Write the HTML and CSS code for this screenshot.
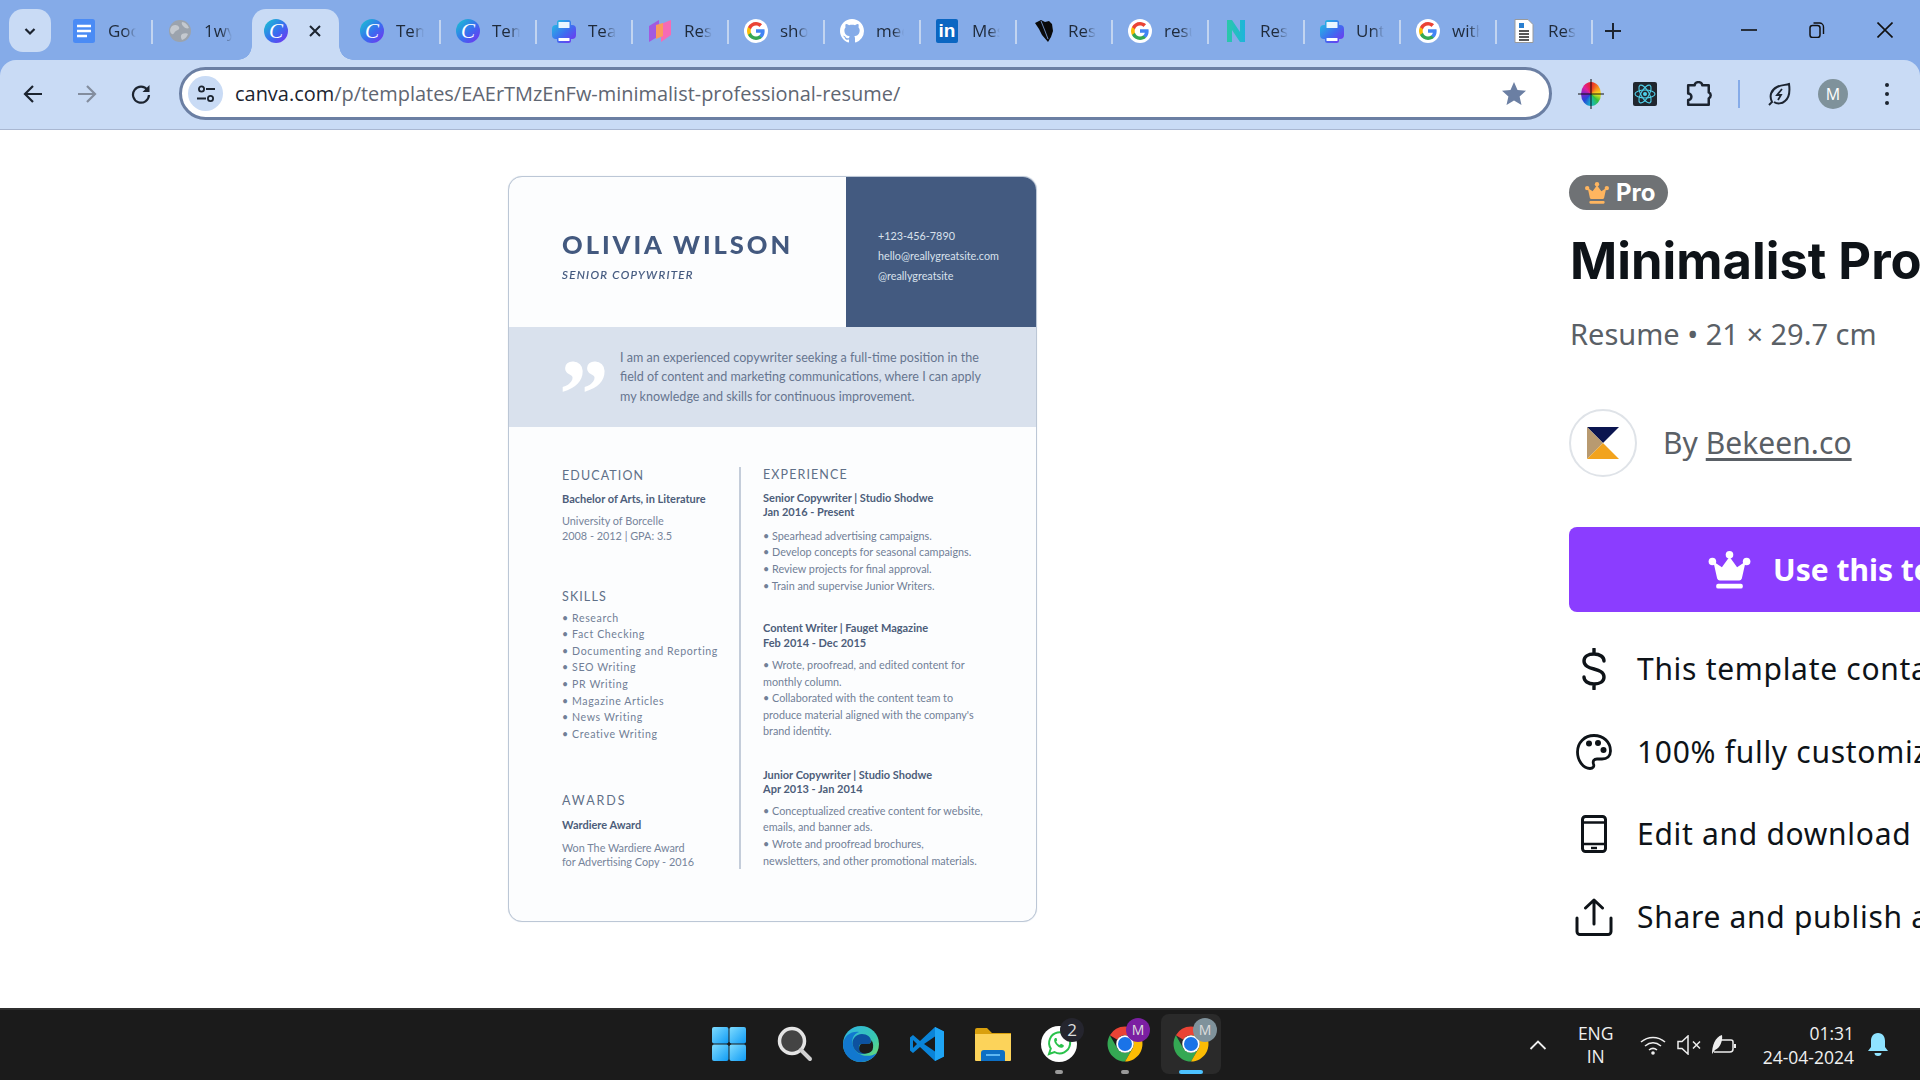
FILE: index.html
```html
<!DOCTYPE html>
<html lang="en">
<head>
<meta charset="utf-8">
<title>Minimalist Professional Resume</title>
<link rel="stylesheet" href="styles.css">
</head>
<body>
<svg class="sprite" aria-hidden="true">
  <defs>
    <linearGradient id="printerG" x1="0" y1="0" x2="1" y2="1"><stop offset="0" stop-color="#1fc8e0"/><stop offset=".55" stop-color="#3f6df0"/><stop offset="1" stop-color="#7a2cf0"/></linearGradient>
    <linearGradient id="winG" x1="0" y1="0" x2="1" y2="1"><stop offset="0" stop-color="#7fdcff"/><stop offset="1" stop-color="#0f9bf5"/></linearGradient>
    <linearGradient id="edgeA" x1="0" y1="0" x2="1" y2="1"><stop offset="0" stop-color="#2fb4e4"/><stop offset=".6" stop-color="#38c8b0"/><stop offset="1" stop-color="#7fe060"/></linearGradient>
    <linearGradient id="nG" x1="0" y1="0" x2="1" y2="0"><stop offset="0" stop-color="#2bc8a8"/><stop offset="1" stop-color="#1cb4dc"/></linearGradient>
    <symbol id="g-logo" viewBox="-3 -3 24 24">
      <circle cx="9" cy="9" r="12" fill="#fff"/>
      <path fill="#4285F4" d="M17.64 9.2c0-.637-.057-1.251-.164-1.84H9v3.481h4.844c-.209 1.125-.843 2.078-1.796 2.717v2.258h2.908c1.702-1.567 2.684-3.874 2.684-6.615z"/>
      <path fill="#34A853" d="M9 18c2.43 0 4.467-.806 5.956-2.18l-2.908-2.259c-.806.54-1.837.86-3.048.86-2.344 0-4.328-1.584-5.036-3.711H.957v2.332C2.438 15.983 5.482 18 9 18z"/>
      <path fill="#FBBC05" d="M3.964 10.71c-.18-.54-.282-1.117-.282-1.71s.102-1.17.282-1.71V4.958H.957C.347 6.173 0 7.548 0 9s.348 2.827.957 4.042l3.007-2.332z"/>
      <path fill="#EA4335" d="M9 3.58c1.321 0 2.508.454 3.44 1.345l2.582-2.58C13.463.891 11.426 0 9 0 5.482 0 2.438 2.017.957 4.958L3.964 7.29C4.672 5.163 6.656 3.58 9 3.58z"/>
    </symbol>
    <symbol id="printer" viewBox="0 0 24 24">
      <path fill="url(#printerG)" d="M5 6V3.5A2.5 2.5 0 0 1 7.500 1h9A2.500 2.500 0 0 1 19 3.500V6h1a4 4 0 0 1 4 4v6a4 4 0 0 1-4 4h-1v1.500a2.500 2.500 0 0 1-2.500 2.500h-9A2.500 2.500 0 0 1 5 21.500V20H4a4 4 0 0 1-4-4v-6a4 4 0 0 1 4-4z"/>
      <rect x="6.500" y="3" width="11" height="6" rx=".5" fill="#e9f6ff"/>
      <rect x="6.500" y="19" width="11" height="3" rx=".5" fill="#fff"/>
    </symbol>
    <symbol id="crown" viewBox="0 0 44 40">
      <circle cx="22" cy="4" r="4"/><circle cx="4" cy="11" r="4"/><circle cx="40" cy="11" r="4"/>
      <path d="M22 6l8 11 9-6-4 18a3 3 0 0 1-3 2H12a3 3 0 0 1-3-2L5 11l9 6z"/>
      <rect x="8" y="34.500" width="28" height="5" rx="2"/>
    </symbol>
    <symbol id="chrome" viewBox="0 0 48 48">
      <path fill="#ea4335" d="M24 4A20 20 0 0 1 41.300 14H24A10 10 0 0 0 15.300 19L6.700 14A20 20 0 0 1 24 4Z"/>
      <path fill="#34a853" d="M6.700 14A20 20 0 0 0 24 44L32.660 29A10 10 0 0 1 15.340 29Z"/>
      <path fill="#fbbc04" d="M41.300 14A20 20 0 0 1 24 44L32.660 29A10 10 0 0 0 24 14Z"/>
      <circle cx="24" cy="24" r="10" fill="#fff"/><circle cx="24" cy="24" r="8" fill="#1a73e8"/>
    </symbol>
  </defs>
</svg>

<header class="tabstrip">
  <button class="tab-search" aria-label="Search tabs">
    <svg class="ico-14" viewBox="0 0 14 14"><path d="M2.500 5l4.500 4.500L11.500 5" fill="none" stroke="#1c2430" stroke-width="2.200"/></svg>
  </button>
  <div class="tab">
    <svg class="fav" viewBox="0 0 24 24"><rect x="1" width="22" height="24" rx="2.500" fill="#4a8bf5"/><path d="M5 7h14M5 12h14M5 17h10" stroke="#fff" stroke-width="2.300"/></svg>
    <span class="tab-label">Google Docs</span>
  </div>
  <div class="tab">
    <svg class="fav" viewBox="0 0 24 24"><circle cx="12" cy="12" r="11" fill="#9ba3ad"/><path d="M4 7c3-2 6-1 7 1s-1 3-3 4-2 4-4 3-3-5 0-8zM14 3c3 0 6 3 7 6-2 1-4 0-5-1s-3-3-2-5zM14 15c2-1 5-1 6 0-1 3-3 5-6 6-1-2-2-4 0-6z" fill="#c4c9cf"/></svg>
    <span class="tab-label">1wy</span>
  </div>
  <div class="tab tab-active">
    <span class="canva-mark">C</span>
    <svg class="close-x" viewBox="0 0 14 14"><path d="M2 2l10 10M12 2L2 12" stroke="#1c2430" stroke-width="2"/></svg>
  </div>
  <div class="tab"><span class="canva-mark">C</span><span class="tab-label">Templates</span></div>
  <div class="tab"><span class="canva-mark">C</span><span class="tab-label">Templates</span></div>
  <div class="tab"><svg class="fav"><use href="#printer"/></svg><span class="tab-label">Teal</span></div>
  <div class="tab">
    <svg class="fav" viewBox="0 0 24 24"><path d="M1 7l10-6v16L1 23z" fill="#a25ae0"/><path d="M13 5l10-4v15l-10 7z" fill="#f56bb5"/><path d="M8 6l7-2v13l-7 3z" fill="#fb9a5c"/></svg>
    <span class="tab-label">Resume</span>
  </div>
  <div class="tab"><svg class="fav"><use href="#g-logo"/></svg><span class="tab-label">should</span></div>
  <div class="tab">
    <svg class="fav" viewBox="0 0 16 16"><path fill="#fff" d="M8 0C3.580 0 0 3.580 0 8c0 3.540 2.290 6.530 5.470 7.590.4.070.55-.17.55-.38 0-.19-.01-.82-.01-1.490-2.010.37-2.530-.49-2.690-.94-.09-.23-.48-.94-.82-1.130-.28-.15-.68-.52-.01-.53.63-.01 1.080.58 1.230.82.72 1.210 1.870.87 2.330.66.07-.52.28-.87.51-1.070-1.780-.2-3.640-.89-3.640-3.950 0-.87.31-1.590.82-2.150-.08-.2-.36-1.020.08-2.120 0 0 .67-.21 2.200.82.64-.18 1.320-.27 2-.27s1.360.09 2 .27c1.530-1.040 2.200-.82 2.200-.82.44 1.100.16 1.920.08 2.120.51.56.82 1.270.82 2.150 0 3.070-1.870 3.750-3.650 3.950.29.25.54.73.54 1.480 0 1.070-.01 1.930-.01 2.200 0 .21.15.46.55.38A8.010 8.010 0 0016 8c0-4.420-3.580-8-8-8z"/></svg>
    <span class="tab-label">meet</span>
  </div>
  <div class="tab"><span class="li-mark">in</span><span class="tab-label">Messaging</span></div>
  <div class="tab">
    <svg class="fav" viewBox="0 0 24 24"><path d="M3 4l6-3 4 2 4-1 3 3 1 7-2 6-3 5-6-7-3-6z" fill="#0a0a0a"/><path d="M9 2l4 10 3 8" stroke="#85abe8" stroke-width=".8" fill="none"/></svg>
    <span class="tab-label">Resume</span>
  </div>
  <div class="tab"><svg class="fav"><use href="#g-logo"/></svg><span class="tab-label">resume</span></div>
  <div class="tab">
    <svg class="fav" viewBox="0 0 24 24"><path d="M3 1h5l8 12V1h5v22h-5L8 11v12H3z" fill="url(#nG)"/></svg>
    <span class="tab-label">Resume</span>
  </div>
  <div class="tab"><svg class="fav"><use href="#printer"/></svg><span class="tab-label">Untitled</span></div>
  <div class="tab"><svg class="fav"><use href="#g-logo"/></svg><span class="tab-label">with</span></div>
  <div class="tab">
    <svg class="fav" viewBox="0 0 24 24"><path d="M3 .5h13l5 5V23.500H3z" fill="#fff" stroke="#9a9a9a"/><rect x="7" y="4" width="5" height="5" fill="#2a7fd0"/><path d="M7 12h10M7 15h10M7 18h10M7 21h10" stroke="#222" stroke-width="1.400"/></svg>
    <span class="tab-label">Resume</span>
  </div>
  <button class="new-tab" aria-label="New tab">
    <svg class="ico-16" viewBox="0 0 16 16"><path d="M8 0v16M0 8h16" stroke="#1c2430" stroke-width="2"/></svg>
  </button>
  <div class="win-controls">
    <svg class="win-btn" viewBox="0 0 16 16"><path d="M0 8h16" stroke="#111" stroke-width="1.600"/></svg>
    <svg class="win-btn" viewBox="0 0 16 16"><rect x="1" y="3.500" width="10" height="12" rx="2.500" fill="none" stroke="#111" stroke-width="1.500"/><path d="M4.500 1h6a4 4 0 0 1 4 4v7" fill="none" stroke="#111" stroke-width="1.400"/></svg>
    <svg class="win-btn" viewBox="0 0 16 16"><path d="M.5.500l15 15M15.500.500l-15 15" stroke="#111" stroke-width="1.600"/></svg>
  </div>
</header>

<nav class="toolbar">
  <button class="tool-btn" aria-label="Back"><svg class="ico-20" viewBox="0 0 20 20"><path d="M19 10H2M10 2l-8 8 8 8" fill="none" stroke="#1c2430" stroke-width="2.200"/></svg></button>
  <button class="tool-btn" aria-label="Forward"><svg class="ico-20" viewBox="0 0 20 20"><path d="M1 10h17M10 2l8 8-8 8" fill="none" stroke="#838d9e" stroke-width="2.200"/></svg></button>
  <button class="tool-btn" aria-label="Reload"><svg class="ico-20" viewBox="0 0 20 20"><path d="M16.500 6A8 8 0 1 0 18 11" fill="none" stroke="#1c2430" stroke-width="2.200"/><path d="M18.500 1v7h-7z" fill="#1c2430"/></svg></button>
  <div class="address">
    <span class="tune">
      <svg class="ico-20" viewBox="0 0 20 20"><circle cx="5.500" cy="5" r="2.600" fill="none" stroke="#1c2430" stroke-width="1.800"/><path d="M10 5h9M1 14.500h9" stroke="#1c2430" stroke-width="2"/><circle cx="14.500" cy="14.500" r="2.600" fill="none" stroke="#1c2430" stroke-width="1.800"/></svg>
    </span>
    <span class="url"><span class="url-host">canva.com</span>/p/templates/EAErTMzEnFw-minimalist-professional-resume/</span>
    <svg class="star" viewBox="0 0 24 24"><path d="M12 0l3.500 8 8.500.8-6.400 5.700 1.900 8.500L12 18.600 4.500 23l1.900-8.500L0 8.800 8.500 8z" fill="#6b7fa3"/></svg>
  </div>
  <div class="ext-btn">
    <span class="wheel"></span>
    <svg class="wheel-cross" viewBox="0 0 26 30"><path d="M13 0v30M0 15h26" stroke="#111" stroke-width="1"/></svg>
  </div>
  <div class="ext-btn">
    <svg class="ext-svg" viewBox="0 0 24 24"><rect width="24" height="24" rx="2" fill="#20262e"/><g fill="none" stroke="#4fd0ea" stroke-width="1.100"><ellipse cx="12" cy="12" rx="10" ry="4"/><ellipse cx="12" cy="12" rx="10" ry="4" transform="rotate(60 12 12)"/><ellipse cx="12" cy="12" rx="10" ry="4" transform="rotate(120 12 12)"/></g><circle cx="12" cy="12" r="2" fill="#4fd0ea"/></svg>
  </div>
  <div class="ext-btn">
    <svg class="ext-svg ext-puzzle" viewBox="0 0 24 24"><path d="M2 4h6a3.500 3 0 0 1 7 0h6v6.500a3 3 0 0 1 0 5.500v6H2v-4.500a3 3 0 0 0 0-6z" fill="none" stroke="#1c2430" stroke-width="2.300" stroke-linejoin="round"/></svg>
  </div>
  <span class="tool-divider"></span>
  <div class="ext-btn">
    <svg class="ext-svg" viewBox="0 0 24 24"><path d="M2 23c1.500-1.500 2-2 3-3-3-6-1-12 5-15 4-2 9-2 12-3 1 7 0 14-4 17-3 3-8 3-11 1" fill="none" stroke="#1c2430" stroke-width="2"/><path d="M15 7l-5 6h4l-3 5" fill="none" stroke="#1c2430" stroke-width="1.800"/></svg>
  </div>
  <div class="ext-btn"><span class="avatar">M</span></div>
  <div class="ext-btn"><span class="kebab"><i></i><i></i><i></i></span></div>
</nav>

<main class="page">
  <article class="resume">
    <section class="r-head">
      <div class="r-id">
        <h2 class="r-name">OLIVIA WILSON</h2>
        <p class="r-role">SENIOR COPYWRITER</p>
      </div>
      <div class="r-contact">
        <p>+123-456-7890</p>
        <p>hello@reallygreatsite.com</p>
        <p>@reallygreatsite</p>
      </div>
    </section>
    <section class="r-band">
      <span class="r-quote">”</span>
      <p class="r-intro">I am an experienced copywriter seeking a full-time position in the<br>field of content and marketing communications, where I can apply<br>my knowledge and skills for continuous improvement.</p>
    </section>
    <section class="r-body">
      <div class="r-left">
        <h3 class="r-h r-h-edu">EDUCATION</h3>
        <p class="r-b r-gap-8">Bachelor of Arts, in Literature</p>
        <p class="r-t r-gap-8">University of Borcelle<br>2008 - 2012 | GPA: 3.5</p>
        <h3 class="r-h r-h-skills">SKILLS</h3>
        <ul class="r-list r-skills">
          <li>• Research</li><li>• Fact Checking</li><li>• Documenting and Reporting</li><li>• SEO Writing</li><li>• PR Writing</li><li>• Magazine Articles</li><li>• News Writing</li><li>• Creative Writing</li>
        </ul>
        <h3 class="r-h r-h-awards">AWARDS</h3>
        <p class="r-b r-gap-9">Wardiere Award</p>
        <p class="r-t r-gap-8">Won The Wardiere Award<br>for Advertising Copy - 2016</p>
      </div>
      <div class="r-right">
        <h3 class="r-h r-h-exp">EXPERIENCE</h3>
        <p class="r-b r-job r-gap-9">Senior Copywriter | Studio Shodwe<br>Jan 2016 - Present</p>
        <ul class="r-list r-gap-8"><li>• Spearhead advertising campaigns.</li><li>• Develop concepts for seasonal campaigns.</li><li>• Review projects for final approval.</li><li>• Train and supervise Junior Writers.</li></ul>
        <p class="r-b r-job r-gap-27">Content Writer | Fauget Magazine<br>Feb 2014 - Dec 2015</p>
        <ul class="r-list r-gap-7"><li>• Wrote, proofread, and edited content for</li><li>monthly column.</li><li>• Collaborated with the content team to</li><li>produce material aligned with the company's</li><li>brand identity.</li></ul>
        <p class="r-b r-job r-gap-28">Junior Copywriter | Studio Shodwe<br>Apr 2013 - Jan 2014</p>
        <ul class="r-list r-gap-6"><li>• Conceptualized creative content for website,</li><li>emails, and banner ads.</li><li>• Wrote and proofread brochures,</li><li>newsletters, and other promotional materials.</li></ul>
      </div>
    </section>
  </article>

  <aside class="details">
    <div class="pro-badge"><svg class="pro-crown"><use href="#crown"/></svg><span>Pro</span></div>
    <h1 class="title">Minimalist Professional Resume</h1>
    <p class="meta">Resume • 21 × 29.7 cm</p>
    <div class="author">
      <span class="author-logo">
        <svg class="ico-32" viewBox="0 0 32 32"><path d="M0 0h32L16 16z" fill="#0b1550"/><path d="M0 0l16 16L0 32z" fill="#b89a70"/><path d="M0 32l16-16 16 16z" fill="#f2a31e"/></svg>
      </span>
      <span class="author-text">By <a class="author-link">Bekeen.co</a></span>
    </div>
    <button class="use-btn"><svg class="use-crown"><use href="#crown"/></svg><span>Use this template</span></button>
    <ul class="features">
      <li>
        <span class="f-ico"><svg class="f-dollar" viewBox="0 0 26 42"><path d="M23 13c0-4-4-7-10-7S3 8.500 3 13c0 10 20 6 20 16 0 4.500-4 7-10 7S3 33 3 29M13 1v5M13 36v5" fill="none" stroke="#0e1318" stroke-width="3.400" stroke-linecap="round"/></svg></span>
        <span>This template contains paid elements</span>
      </li>
      <li>
        <span class="f-ico"><svg class="f-36" viewBox="0 0 36 36"><path d="M18 1.500C8.500 1.500 1.500 8.500 1.500 18c0 9 6 16.500 12.500 16.500 3 0 4.500-2 3.500-4.500-1-3 .5-5 3.500-5h5c5 0 8.500-3 8.500-8C34.500 8 27.500 1.500 18 1.500z" fill="none" stroke="#0e1318" stroke-width="2.800"/><circle cx="13" cy="9.500" r="3" fill="#0e1318"/><circle cx="22" cy="9" r="3" fill="#0e1318"/><circle cx="27.500" cy="16" r="3" fill="#0e1318"/></svg></span>
        <span>100% fully customizable</span>
      </li>
      <li>
        <span class="f-ico"><svg class="f-phone" viewBox="0 0 26 38"><rect x="1.500" y="1.500" width="23" height="35" rx="3" fill="none" stroke="#0e1318" stroke-width="3"/><path d="M1.500 7.500h23M1.500 29h23" stroke="#0e1318" stroke-width="2.600"/><path d="M10 33h6" stroke="#0e1318" stroke-width="2.400"/></svg></span>
        <span>Edit and download on the go</span>
      </li>
      <li>
        <span class="f-ico"><svg class="f-share" viewBox="0 0 38 38"><path d="M19 26V2M10.500 10L19 2l8.500 8" fill="none" stroke="#0e1318" stroke-width="3" stroke-linecap="round" stroke-linejoin="round"/><path d="M2 20v13.500a3 3 0 0 0 3 3h28a3 3 0 0 0 3-3V20" fill="none" stroke="#0e1318" stroke-width="3" stroke-linecap="round"/></svg></span>
        <span>Share and publish anywhere</span>
      </li>
    </ul>
  </aside>
</main>

<footer class="taskbar">
  <div class="apps">
    <div class="app">
      <svg class="app-ico" viewBox="0 0 36 36"><g fill="url(#winG)"><rect x="1" y="1" width="16.500" height="16.500" rx="2"/><rect x="18.500" y="1" width="16.500" height="16.500" rx="2"/><rect x="1" y="18.500" width="16.500" height="16.500" rx="2"/><rect x="18.500" y="18.500" width="16.500" height="16.500" rx="2"/></g></svg>
    </div>
    <div class="app">
      <svg class="app-ico" viewBox="0 0 36 36"><circle cx="15" cy="15" r="12.500" fill="#444" stroke="#e4e4e4" stroke-width="3.500"/><path d="M24 24l9 9" stroke="#d0d0d0" stroke-width="4" stroke-linecap="round"/></svg>
    </div>
    <div class="app">
      <svg class="app-ico" viewBox="0 0 36 36"><circle cx="18" cy="18" r="18" fill="url(#edgeA)"/><path d="M0 18C1 10 8 5 16 6c-6 2-8 8-6 14 3 9 14 13 24 7-4 6-10 9-16 9C7 36 0 28 0 18z" fill="#1278cf"/><path d="M10 20c-2-7 3-12 9-12 5 0 9 3 9 7 0 2-1 3-3 3-5 1-8-1-9 2-1 4 4 7 8 7-6 3-12-1-14-7z" fill="#0d52a0"/><path d="M16.500 20c1-3 4-1.500 8-2 3 0 4-2 4-4 2 3 2 7 1 10-3 4-7 4-10 3-3-1-4-4-3-7z" fill="#1b1b1b"/></svg>
    </div>
    <div class="app">
      <svg class="app-ico" viewBox="0 0 36 36"><path d="M26 1l9 4.500v25L26 35 11 21 4 27 1 24.500v-13L4 9l7 6z" fill="#0a84d8"/><path d="M26 1l9 4.500v25L26 35z" fill="#1fa5f5"/><path d="M26 10.500L15 18l11 7.500z" fill="#1a1a1a"/><path d="M4 14l4 4-4 4z" fill="#1a1a1a"/></svg>
    </div>
    <div class="app">
      <svg class="app-ico" viewBox="0 0 36 36"><path d="M0 4a2 2 0 0 1 2-2h10l5 5h19v27H0z" fill="#d9a00d"/><path d="M0 8h36v26a1 1 0 0 1-1 1H1a1 1 0 0 1-1-1z" fill="#fcd35a"/><path d="M6 35V27a3 3 0 0 1 3-3h18a3 3 0 0 1 3 3v8z" fill="#0d6fc4"/><path d="M11 29h14" stroke="#5fb7f2" stroke-width="2"/></svg>
    </div>
    <div class="app app-open">
      <svg class="app-ico" viewBox="0 0 36 36"><circle cx="18" cy="18" r="18" fill="#fff"/><path d="M8 28l1.800-5.500A10.500 10.500 0 1 1 13.500 26z" fill="none" stroke="#29c24b" stroke-width="2"/><path d="M14 12c-1.500 1.500-1 4 1 6.500s4.500 4 6.500 3c1.500-.7 1.500-2 1-2.500l-2.500-1.200-1.300 1.300c-1.500-.5-3-2-3.500-3.500l1-1.300L15.500 12z" fill="#29c24b"/></svg>
      <span class="badge badge-dark">2</span>
    </div>
    <div class="app app-open">
      <svg class="app-ico chrome-ico"><use href="#chrome"/></svg>
      <span class="badge badge-purple">M</span>
    </div>
    <div class="app app-active">
      <svg class="app-ico chrome-ico"><use href="#chrome"/></svg>
      <span class="badge badge-grey">M</span>
    </div>
  </div>
  <div class="tray">
    <svg class="tray-chev" viewBox="0 0 18 10"><path d="M1.500 9L9 1.500 16.500 9" fill="none" stroke="#eee" stroke-width="1.800"/></svg>
    <div class="lang"><span>ENG</span><span>IN</span></div>
    <svg class="tray-ico" viewBox="0 0 26 20"><path d="M1 7c7-6 17-6 24 0M5 11c5-4 11-4 16 0M9 15c2.500-2 5.500-2 8 0" fill="none" stroke="#eee" stroke-width="1.600"/><circle cx="13" cy="18" r="1.800" fill="#eee"/></svg>
    <svg class="tray-ico tray-sound" viewBox="0 0 26 20"><path d="M1 6.500h4L11 1v18l-6-5.500H1z" fill="none" stroke="#eee" stroke-width="1.500"/><path d="M16 6.500l7 7M23 6.500l-7 7" stroke="#eee" stroke-width="1.500"/></svg>
    <svg class="tray-ico tray-batt" viewBox="0 0 26 22"><path d="M9 6h12a2 2 0 0 1 2 2v7a3 3 0 0 1-3 3H4" fill="none" stroke="#eee" stroke-width="1.500"/><path d="M24 10h2v4h-2z" fill="#eee"/><path d="M2 20c0-8 3-17 10-19 1 6-2 13-7 15z" fill="#eee"/></svg>
    <div class="clock"><span>01:31</span><span>24-04-2024</span></div>
    <svg class="bell" viewBox="0 0 20 24"><path d="M10 0c5 0 7 4 7 8v6l3 4H0l3-4V8c0-4 2-8 7-8z" fill="#8fe3ff"/><path d="M6.500 20h7a3.500 3 0 0 1-7 0z" fill="#8fe3ff"/></svg>
  </div>
</footer>
</body>
</html>
```
FILE: styles.css
```css
* { box-sizing: border-box; }
html, body { margin: 0; height: 100%; }
body {
  width: 1920px; height: 1080px; overflow: hidden;
  display: flex; flex-direction: column;
  background: #85abe8;
  font-family: "Open Sans", "Noto Sans", sans-serif;
}
h1, h2, h3, p, ul { margin: 0; padding: 0; font-weight: inherit; }
ul { list-style: none; }
button { border: 0; padding: 0; background: none; font: inherit; }
.sprite { display: block; width: 0; height: 0; }

.ico-14 { width: 14px; height: 14px; display: block; }
.ico-16 { width: 16px; height: 16px; display: block; }
.ico-20 { width: 20px; height: 20px; display: block; }
.ico-32 { width: 32px; height: 32px; display: block; }

/* Tab strip */
.tabstrip {
  height: 60px; flex: none;
  display: flex; align-items: flex-end;
  background: #85abe8;
  padding-left: 9px;
}
.tab-search {
  width: 42px; height: 43px; margin: 0 5px 8px 0;
  border-radius: 14px; background: #c9dbf5;
  display: flex; align-items: center; justify-content: center;
}
.tab {
  width: 96px; height: 51px; flex: none;
  position: relative;
  display: flex; align-items: center;
  padding: 0 0 7px 16px;
}
.tab::after {
  content: ""; position: absolute; right: -1px; top: 11px;
  width: 2px; height: 24px; background: #c2d4f0;
}
.tab:nth-of-type(2)::after { display: none; }
.fav { width: 24px; height: 24px; flex: none; display: block; }
.tab-label {
  margin-left: 12px; width: 28px; overflow: hidden; white-space: nowrap;
  font-size: 17px; line-height: 24px; color: #1f2a3a;
  -webkit-mask-image: linear-gradient(to right, #000 60%, transparent);
  mask-image: linear-gradient(to right, #000 60%, transparent);
}
.canva-mark {
  width: 24px; height: 24px; flex: none; border-radius: 50%;
  background: linear-gradient(135deg, #15c9cf 0%, #3a6cf0 55%, #7a2cf0 100%);
  color: #fff; text-align: center;
  font: italic 400 21px/24px "Liberation Serif", serif;
}
.li-mark {
  width: 22px; height: 24px; flex: none; margin-right: 2px; border-radius: 2px;
  background: #0a66c2; color: #fff; text-align: center;
  font: 700 19px/24px "Liberation Sans", sans-serif;
}
.tab-active {
  width: 87px; margin: 0 5px 0 4px; padding-left: 12px;
  background: #c9dbf5; border-radius: 14px 14px 0 0;
  justify-content: flex-start;
}
.tab-active::before, .tab-active::after {
  content: ""; position: absolute; bottom: 0; top: auto;
  width: 14px; height: 14px;
}
.tab-active::before {
  right: -14px;
  background: radial-gradient(circle at 100% 0, transparent 13.500px, #c9dbf5 14px);
}
.tab-active::after {
  left: -14px; right: auto;
  background: radial-gradient(circle at 0 0, transparent 13.500px, #c9dbf5 14px);
}
.close-x { width: 14px; height: 14px; margin-left: 20px; display: block; }
.new-tab { width: 16px; height: 16px; margin: 0 0 21px 13px; }
.win-controls {
  margin-left: auto; align-self: flex-start;
  display: flex; gap: 52px; padding: 22px 27px 0 0;
}
.win-btn { width: 16px; height: 16px; display: block; }

/* Toolbar */
.toolbar {
  height: 70px; flex: none;
  display: flex; align-items: center; gap: 10px;
  padding: 0 11px 2px;
  background: #c9dbf5;
  border-bottom: 1px solid #a9b7d1;
  border-radius: 16px 16px 0 0;
}
.tool-btn { width: 44px; height: 44px; display: flex; align-items: center; justify-content: center; }
.address {
  flex: 1; height: 53px; margin: 0 7px 0 6px;
  display: flex; align-items: center;
  background: #fff; border: 3px solid #6b7fa3; border-radius: 27px;
  padding: 0 23px 0 6px;
}
.tune {
  width: 35px; height: 35px; border-radius: 50%; background: #c9dbf5;
  display: flex; align-items: center; justify-content: center;
}
.url {
  margin-left: 12px; flex: 1;
  font-size: 19.950px; line-height: 28px; color: #5f6672; white-space: nowrap;
}
.url-host { color: #1c2430; }
.star { width: 24px; height: 24px; display: block; }
.ext-btn { width: 44px; height: 44px; position: relative; display: flex; align-items: center; justify-content: center; }
.ext-svg { width: 24px; height: 24px; display: block; }
.ext-puzzle { width: 26px; height: 26px; }
.wheel {
  width: 20px; height: 24px; border-radius: 50%;
  background: conic-gradient(#e8212a, #f58a1f, #f6e71d, #34c23c, #16b7c9, #2447d8, #7a24c9, #e0209a, #e8212a);
}
.wheel-cross { position: absolute; left: 9px; top: 7px; width: 26px; height: 30px; }
.tool-divider { width: 2px; height: 28px; margin: 0 7px; background: #85abe8; }
.avatar {
  width: 30px; height: 30px; border-radius: 50%;
  background: #7f929b; color: #fff; text-align: center;
  font-size: 16px; line-height: 30px;
}
.kebab { display: flex; flex-direction: column; gap: 5px; }
.kebab i { width: 4px; height: 4px; border-radius: 50%; background: #1c2430; display: block; }

/* Page */
.page {
  flex: 1; min-height: 0; overflow: hidden;
  display: flex; align-items: flex-start; gap: 532px;
  padding: 46px 0 0 508px;
  background: #fff;
}

/* Resume */
.resume {
  width: 529px; height: 746px; flex: none; overflow: hidden;
  display: flex; flex-direction: column;
  background: #fcfdfe;
  border: 1px solid #bcc7d6; border-radius: 14px;
  font-family: Lato, "Noto Sans", sans-serif;
  color: #6d7c95;
  box-shadow: 0 0 1px #c5cfdc;
}
.r-head { height: 150px; flex: none; display: flex; }
.r-id { flex: 1; padding: 52px 0 0 53px; filter: blur(.3px); }
.r-name {
  font-size: 25.500px; line-height: 30px; font-weight: 900;
  letter-spacing: 2.950px; color: #43597f;
}
.r-role {
  margin-top: 8px; font-size: 11.500px; line-height: 16px;
  font-style: italic; font-weight: 400; letter-spacing: 1.300px; color: #43597f;
  -webkit-text-stroke: .2px #43597f;
}
.r-contact {
  width: 190px; flex: none; background: #435a80;
  padding: 49px 0 0 32px; color: #d9e1ec;
  font-size: 10.800px; line-height: 20px;
}
.r-band {
  height: 100px; flex: none; display: flex;
  background: #d9e1ed; padding: 21px 0 0 53px;
}
.r-quote {
  width: 61px; flex: none; height: 60px; margin-left: -3px; overflow: hidden;
  color: #fff; font: 700 100px/92px "Liberation Serif", serif;
}
.r-intro { font-size: 12.550px; line-height: 19.300px; color: #66758f; white-space: nowrap; }
.r-body { flex: 1; display: flex; padding: 40px 0 0 53px; }
.r-left { width: 177px; height: 402px; flex: none; }
.r-right { border-left: 2px solid #c4cdda; height: 402px; padding-left: 22px; flex: 1; white-space: nowrap; }
.r-h { font-size: 12.500px; line-height: 16px; letter-spacing: 1.100px; color: #5f7088; font-weight: 400; }
.r-h-edu { margin-top: 1px; }
.r-h-skills { margin-top: 45px; }
.r-h-awards { margin-top: 51px; letter-spacing: 1.900px; }
.r-h-exp { line-height: 14px; margin-top: 1px; }
.r-b { font-size: 11px; line-height: 14.400px; font-weight: 700; color: #4d5d7a; white-space: nowrap; }
.r-t { font-size: 10.850px; line-height: 14.600px; color: #76849b; white-space: nowrap; }
.r-list li { font-size: 10.800px; line-height: 16.600px; color: #717f97; }
.r-skills { margin-top: 5px; }
.r-skills li { letter-spacing: .6px; font-size: 10.600px; }
.r-gap-6 { margin-top: 6px; }
.r-gap-7 { margin-top: 7px; }
.r-gap-8 { margin-top: 8px; }
.r-gap-9 { margin-top: 9px; }
.r-gap-27 { margin-top: 27px; }
.r-gap-28 { margin-top: 28px; }

/* Details */
.details { flex: none; width: 900px; color: #0e1318; font-family: "Noto Sans", sans-serif; white-space: nowrap; }
.pro-badge {
  width: 99px; height: 35px; margin-top: -1px; border-radius: 18px;
  background: #6f7275; color: #fff;
  display: flex; align-items: center; gap: 7px; padding-left: 16px;
  font: 700 24px/35px Inter, sans-serif;
}
.pro-crown { width: 24px; height: 22px; fill: #ffb55f; display: block; }
.title {
  margin-top: 18px; padding-left: 1px;
  font: 700 50.700px/66px Inter, sans-serif; color: #0e1318;
}
.meta { margin-top: 19px; padding-left: 1px; font-size: 29px; line-height: 42px; color: #5a6066; }
.author { margin-top: 54px; display: flex; align-items: center; gap: 26px; }
.author-logo {
  width: 68px; height: 68px; border-radius: 50%;
  border: 2px solid #dfe3e8;
  display: flex; align-items: center; justify-content: center;
}
.author-text { font-size: 30px; line-height: 42px; color: #5a6066; letter-spacing: .05px; }
.author-link { text-decoration: underline; text-underline-offset: 4px; }
.use-btn {
  margin-top: 50px; width: 900px; height: 85px;
  display: flex; align-items: center; padding-left: 139px; gap: 22px;
  background: #8b3dff; border-radius: 8px; color: #fff;
  font: 700 30px/40px "Noto Sans", sans-serif;
}
.use-crown { width: 43px; height: 38px; fill: #fff; display: block; }
.features { margin-top: 16px; }
.features li {
  height: 82.500px; display: flex; align-items: center; gap: 18px;
  font-size: 30px; line-height: 40px; letter-spacing: .7px; color: #0e1318;
}
.f-ico { width: 50px; flex: none; display: flex; justify-content: center; }
.f-dollar { width: 26px; height: 42px; display: block; }
.f-36 { width: 36px; height: 36px; display: block; }
.f-phone { width: 26px; height: 38px; display: block; }
.f-share { width: 38px; height: 38px; display: block; }

/* Taskbar */
.taskbar {
  height: 72px; flex: none; position: relative;
  display: flex; align-items: center; justify-content: center;
  background: #1b1b1b; border-top: 2px solid #2f2f2f;
}
.apps { display: flex; margin-top: -2px; }
.app {
  width: 66px; height: 60px; position: relative;
  display: flex; align-items: center; justify-content: center;
}
.app-ico { width: 36px; height: 36px; display: block; }
.chrome-ico { width: 42px; height: 42px; }
.app-open::after, .app-active::after {
  content: ""; position: absolute; left: 50%; bottom: 0; transform: translateX(-50%);
  width: 8px; height: 4px; border-radius: 2px; background: #9a9a9a;
}
.app-active { background: #2a2a2a; border-radius: 8px; width: 60px; margin-left: 3px; margin-right: 3px; }
.app-active::after { width: 24px; background: #4cc2ff; }
.badge {
  position: absolute; top: 4px; right: 8px;
  width: 24px; height: 24px; border-radius: 50%;
  color: #ddd; text-align: center; font-size: 14px; line-height: 24px;
}
.badge-dark { background: #25252e; font-size: 17px; }
.badge-purple { background: #7b1fa2; }
.badge-grey { background: #7f929b; right: 4px; }
.tray {
  position: absolute; right: 32px; top: 0; bottom: 0;
  display: flex; align-items: center; color: #f0f0f0; font-size: 17.500px;
}
.tray-chev { width: 18px; height: 10px; display: block; margin-right: 10.500px; }
.lang { width: 76px; display: flex; flex-direction: column; align-items: center; line-height: 23px; margin-right: 6px; }
.tray-ico { width: 26px; height: 20px; display: block; margin-right: 11px; }
.tray-sound { margin-right: 7.500px; }
.tray-batt { height: 22px; margin-right: 26.500px; }
.clock { display: flex; flex-direction: column; align-items: flex-end; line-height: 24px; margin-right: 14px; }
.bell { width: 20px; height: 24px; display: block; }
```
